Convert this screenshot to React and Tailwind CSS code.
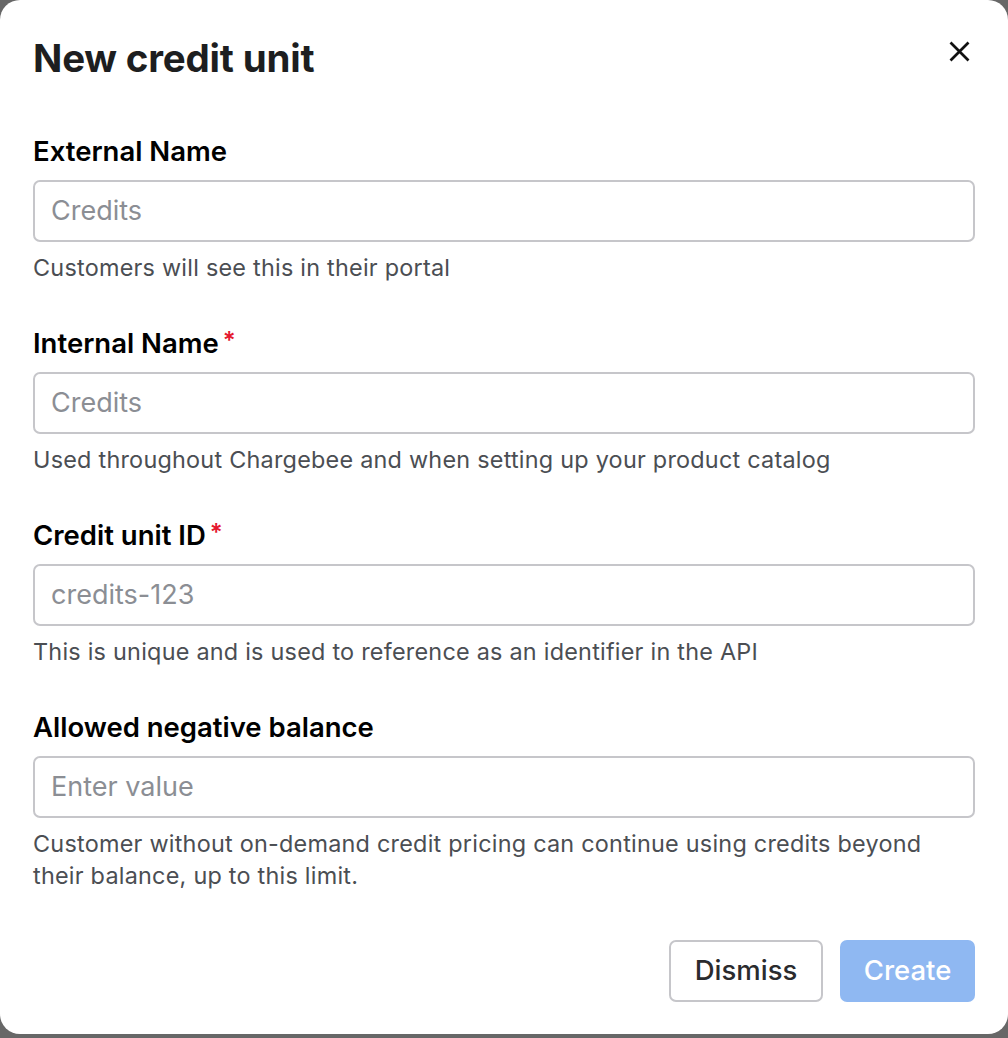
import React from "react";

function Field({ label, required, placeholder, help }) {
  return (
    <div className="flex flex-col">
      <div className="flex items-start h-[32px] leading-[32px] text-[27.5px] font-semibold text-black">
        <span>{label}</span>
        {required && <span className="text-[#e5182f] ml-[4px] text-[24px] leading-[28px]">*</span>}
      </div>
      <div className="mt-[13px] h-[62px] border-2 border-[#c6c6ca] rounded-[7px] flex items-center px-[16px]">
        <input
          className="w-full outline-none text-[27px] text-[#2a2b2e] placeholder:text-[#8b8e94] bg-transparent"
          placeholder={placeholder}
        />
      </div>
      <p className="mt-[10px] text-[23.4px] leading-[32px] tracking-[0.24px] text-[#4b4e53]">{help}</p>
    </div>
  );
}

export default function App() {
  return (
    <div className="w-full h-[1038px] bg-[#676767]" style={{ fontFamily: "Inter, 'Noto Sans', sans-serif" }}>
      <div className="bg-white rounded-[20px] h-[1034px] px-[33px] flex flex-col">
        <div className="flex items-start justify-between pt-[38px]" style={{ height: 78 }}>
          <h1 className="text-[38.5px] leading-[40px] font-bold text-[#1d1e20] tracking-[-0.2px]">New credit unit</h1>
          <svg width="21" height="21" viewBox="0 0 21 21" className="mr-[5px] mt-[3px]" fill="none" stroke="#111" strokeWidth="2.7" strokeLinecap="butt">
            <path d="M1.5 1.5 L19.5 19.5 M19.5 1.5 L1.5 19.5" />
          </svg>
        </div>
        <div className="mt-[57px] flex flex-col gap-[43px]">
          <Field label="External Name" placeholder="Credits" help="Customers will see this in their portal" />
          <Field label="Internal Name" required placeholder="Credits" help="Used throughout Chargebee and when setting up your product catalog" />
          <Field label="Credit unit ID" required placeholder="credits-123" help="This is unique and is used to reference as an identifier in the API" />
          <Field label="Allowed negative balance" placeholder="Enter value" help={<>Customer without on-demand credit pricing can continue using credits beyond<br />their balance, up to this limit.</>} />
        </div>
        <div className="mt-[48px] flex justify-end gap-[17px]">
          <button className="h-[62px] w-[154px] border-2 border-[#c6c6ca] rounded-[7px] text-[27.5px] font-medium text-[#2a2b2e] bg-white">Dismiss</button>
          <button className="h-[62px] w-[135px] rounded-[7px] text-[27.5px] font-medium text-white bg-[#8fb8f2]">Create</button>
        </div>
      </div>
    </div>
  );
}
